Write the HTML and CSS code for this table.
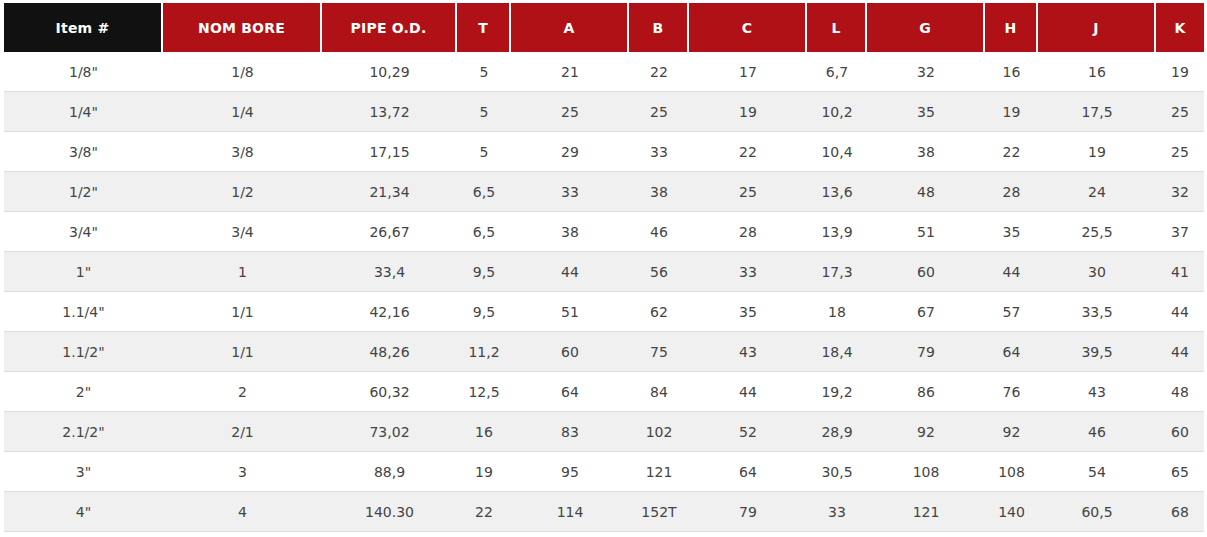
FILE: index.html
```html
<!DOCTYPE html>
<html>
<head>
<meta charset="utf-8">
<link rel="stylesheet" href="styles.css">
</head>
<body>
<div class="wrap">
<table class="spec">
<colgroup>
<col class="c159"><col class="c159"><col class="c135"><col class="c54"><col class="c118"><col class="c60"><col class="c118"><col class="c60"><col class="c118"><col class="c53"><col class="c118"><col class="c48">
</colgroup>
<thead>
<tr><th class="dark">Item #</th><th>NOM BORE</th><th>PIPE O.D.</th><th>T</th><th>A</th><th>B</th><th>C</th><th>L</th><th>G</th><th>H</th><th>J</th><th class="last">K</th></tr>
</thead>
<tbody>
<tr><td>1/8"</td><td>1/8</td><td>10,29</td><td>5</td><td>21</td><td>22</td><td>17</td><td>6,7</td><td>32</td><td>16</td><td>16</td><td>19</td></tr>
<tr><td>1/4"</td><td>1/4</td><td>13,72</td><td>5</td><td>25</td><td>25</td><td>19</td><td>10,2</td><td>35</td><td>19</td><td>17,5</td><td>25</td></tr>
<tr><td>3/8"</td><td>3/8</td><td>17,15</td><td>5</td><td>29</td><td>33</td><td>22</td><td>10,4</td><td>38</td><td>22</td><td>19</td><td>25</td></tr>
<tr><td>1/2"</td><td>1/2</td><td>21,34</td><td>6,5</td><td>33</td><td>38</td><td>25</td><td>13,6</td><td>48</td><td>28</td><td>24</td><td>32</td></tr>
<tr><td>3/4"</td><td>3/4</td><td>26,67</td><td>6,5</td><td>38</td><td>46</td><td>28</td><td>13,9</td><td>51</td><td>35</td><td>25,5</td><td>37</td></tr>
<tr><td>1"</td><td>1</td><td>33,4</td><td>9,5</td><td>44</td><td>56</td><td>33</td><td>17,3</td><td>60</td><td>44</td><td>30</td><td>41</td></tr>
<tr><td>1.1/4"</td><td>1/1</td><td>42,16</td><td>9,5</td><td>51</td><td>62</td><td>35</td><td>18</td><td>67</td><td>57</td><td>33,5</td><td>44</td></tr>
<tr><td>1.1/2"</td><td>1/1</td><td>48,26</td><td>11,2</td><td>60</td><td>75</td><td>43</td><td>18,4</td><td>79</td><td>64</td><td>39,5</td><td>44</td></tr>
<tr><td>2"</td><td>2</td><td>60,32</td><td>12,5</td><td>64</td><td>84</td><td>44</td><td>19,2</td><td>86</td><td>76</td><td>43</td><td>48</td></tr>
<tr><td>2.1/2"</td><td>2/1</td><td>73,02</td><td>16</td><td>83</td><td>102</td><td>52</td><td>28,9</td><td>92</td><td>92</td><td>46</td><td>60</td></tr>
<tr><td>3"</td><td>3</td><td>88,9</td><td>19</td><td>95</td><td>121</td><td>64</td><td>30,5</td><td>108</td><td>108</td><td>54</td><td>65</td></tr>
<tr><td>4"</td><td>4</td><td>140.30</td><td>22</td><td>114</td><td>152T</td><td>79</td><td>33</td><td>121</td><td>140</td><td>60,5</td><td>68</td></tr>
</tbody>
</table>
</div>
</body>
</html>
```
FILE: styles.css
```css
html, body {
  margin: 0;
  padding: 0;
  background: #ffffff;
}
.wrap {
  padding: 3px 3px 0 4px;
}
.spec {
  width: 1200px;
  table-layout: fixed;
  border-collapse: separate;
  border-spacing: 0;
  font-family: "DejaVu Sans", "Open Sans", sans-serif;
  color: #333333;
}
.c159 { width: 159px; }
.c135 { width: 135px; }
.c54 { width: 54px; }
.c118 { width: 118px; }
.c60 { width: 60px; }
.c53 { width: 53px; }
.c48 { width: 48px; }
.spec th {
  height: 49px;
  padding: 0;
  background: #b01117;
  color: #ffffff;
  font-size: 14px;
  font-weight: bold;
  text-align: center;
  border-right: 2px solid #ffffff;
  box-sizing: border-box;
  letter-spacing: 0.2px;
}
.spec th.dark {
  background: #111111;
}
.spec th.last {
  border-right: none;
}
.spec td {
  height: 39px;
  padding: 0;
  text-align: center;
  font-size: 14px;
  border-bottom: 1px solid #dddddd;
  color: #444444;
}
.spec tbody tr:nth-child(even) td {
  background: #f0f0f0;
}
```
